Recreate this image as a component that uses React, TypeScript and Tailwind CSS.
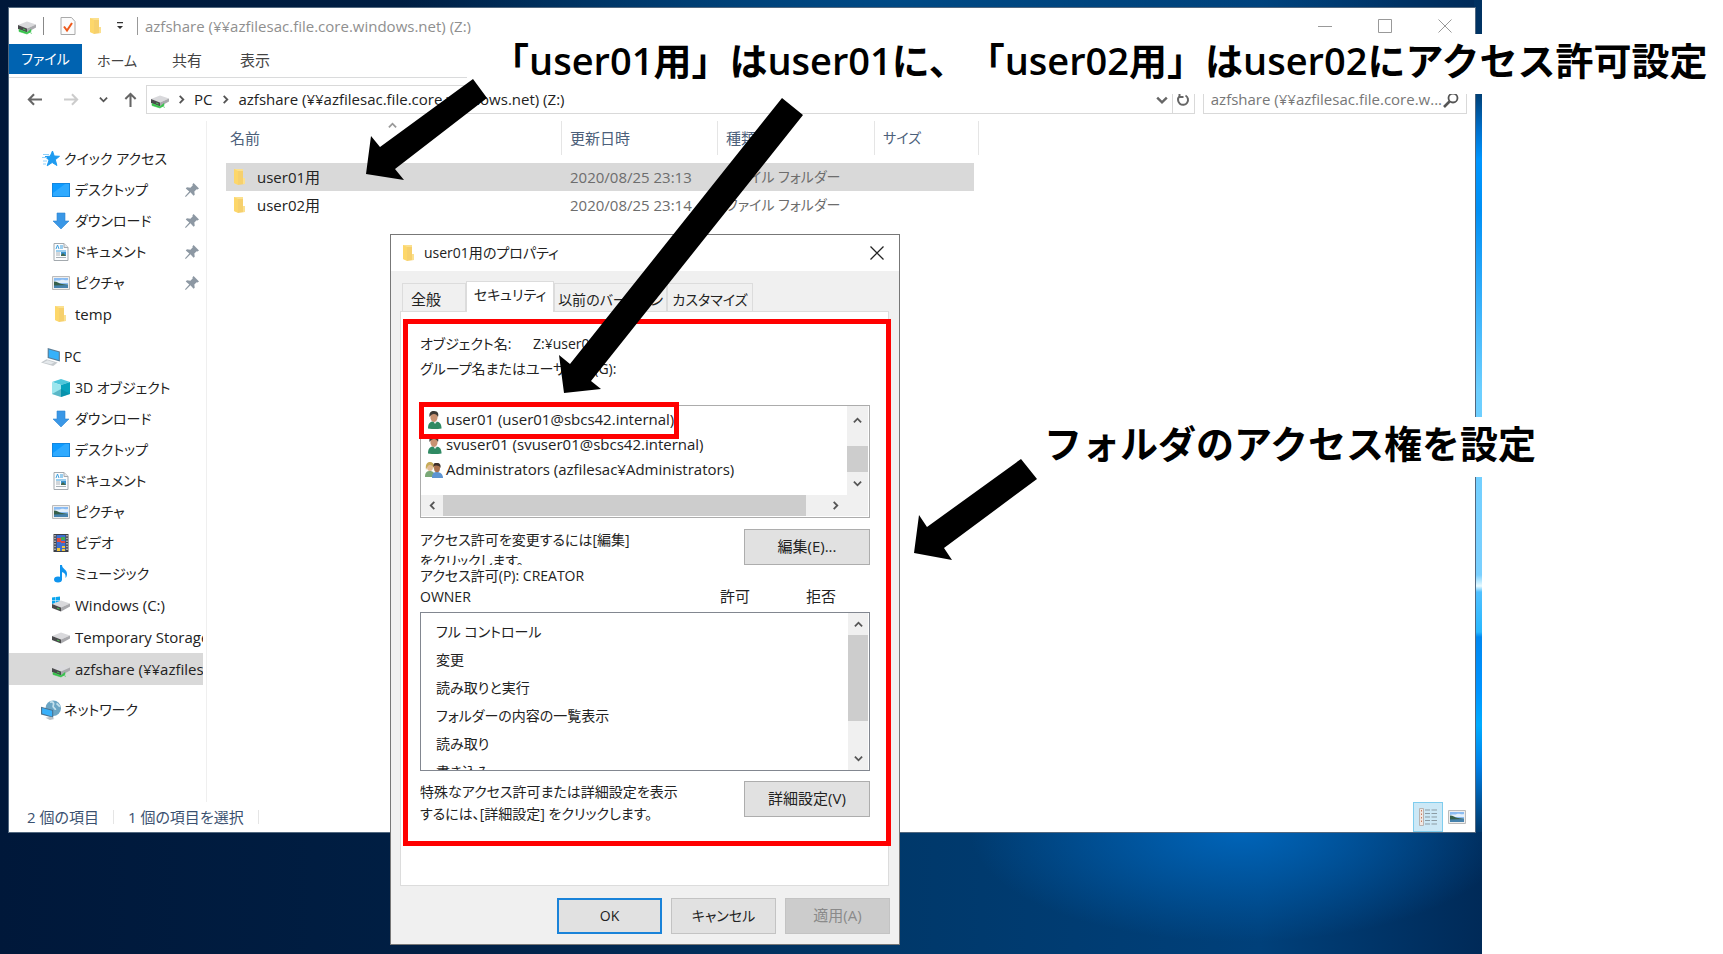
import type { ReactNode } from "react";

const Svg = ({ children, className = "w-[18px] h-[18px]" }: { children: ReactNode; className?: string }) => (
    <svg viewBox="0 0 18 18" className={`shrink-0 ${className}`} aria-hidden="true">{children}</svg>
);

const Folder = () => (
    <Svg>
        <path d="M3 1h9v14l-6 1-3-1z" fill="#fbe08f" />
        <path d="M3 1l4 2v14l-4-2z" fill="#fdd76a" />
        <path d="M7 3h5v11l2 2-7 1z" fill="#f6d06d" />
        <path d="M12 10h2v6h-2z" fill="#fbe08f" />
    </Svg>
);

const Drive = ({ network = false, windows = false }) => (
    <Svg className="w-5 h-[18px]">
        {windows && <path d="M0 1.500l3.500-.5v3.500H0zM4 1l4-.5v4H4zM0 5h3.500v3.500L0 8zM4 5h4v4l-4-.5z" fill="#0aa5ee" />}
        <path d="M0 8l9-3.500 9 3-9 4z" fill="#d9d9dc" />
        <path d="M0 8l9 3.500v4L0 12z" fill="#4a4a4c" />
        <path d="M9 11.500l9-4v3l-9 5z" fill="#a9a9ad" />
        <path d="M5 11.500l2.500 1v1L5 12.500z" fill="#44c553" />
        {network && <path d="M1 12.500l8 3 4-3v2l-4 2.500-8-2.500zM11 15l3 1.500" fill="#35c24a" stroke="#35c24a" strokeWidth=".6" />}
    </Svg>
);

const Star = () => (
    <Svg>
        <path d="M10.500 1l1.700 5 5.300.3-4.200 3.400 1.600 5.800-4.700-3-5 3.300 1.800-5.700L3 6.600l5.200-.4z" fill="#1e9bf0" stroke="#1e9bf0" />
        <path d="M1 4.500h6M0 7.500h5M1 11h4M1 14h3" stroke="#8fd0fa" strokeWidth="1" />
    </Svg>
);

const Desktop = () => (
    <Svg>
        <path d="M0 2h18v14H0z" fill="#1287e0" />
        <path d="M1 3h16v12H1z" fill="#0d9bff" />
        <path d="M1 12L13 3h4v12H1z" fill="#2faaff" />
    </Svg>
);

const Download = () => (
    <Svg><path d="M5 1h8v8h4l-8 8-8-8h4z" fill="#3a97e6" stroke="#2d84d2" strokeWidth=".6" /></Svg>
);

const Document = () => (
    <Svg>
        <path d="M2 .5h10l4 4v13H2z" fill="#fbfcfd" stroke="#a3a9ae" />
        <path d="M12 .5v4h4" fill="#e6e9ec" stroke="#a3a9ae" />
        <path d="M4 6l1.500-4L7 6M8 3h3M8 5h3M4 8h10" stroke="#3ba0e0" fill="none" />
        <path d="M9 9h5v4H9z" fill="#3d93cf" />
        <path d="M9 12l2-2 3 3H9z" fill="#44694f" />
        <path d="M4 10h4M4 12h4M4 14.500h10" stroke="#a8b0b6" />
    </Svg>
);

const Picture = () => (
    <Svg>
        <path d="M.5 2.500h17v13H.5z" fill="#eee" stroke="#bbb" />
        <path d="M2 4h14v10H2z" fill="#8bbcf2" />
        <path d="M2 7c3-1 5 0 7-1s4 1 7 0v3H2z" fill="#e3effb" />
        <path d="M2 7.500c3 0 5 2 8 2.500l6 .8V12H2z" fill="#37604a" />
        <path d="M2 11.500l14-.5v3H2z" fill="#4682ad" />
    </Svg>
);

const Thispc = () => (
    <Svg className="w-5 h-5">
        <path d="M6 1l11 3v9L6 10z" fill="#5b7c95" />
        <path d="M7 2.200l9 2.500v7L7 9.300z" fill="#35b1fa" />
        <path d="M0 14l5-3 10 3-4 3z" fill="#c5cace" />
        <path d="M2 14l4-2 6 2-3 1.500z" fill="#e4e8eb" />
    </Svg>
);

const Cube = () => (
    <Svg>
        <path d="M9 0l9 3-9 3-9-3z" fill="#4fc7db" />
        <path d="M0 3l9 3v12l-9-3z" fill="#9be6ee" />
        <path d="M18 3L9 6v12l9-3z" fill="#08a2bd" />
        <path d="M0 15l9-5 9 5-9 3z" fill="#0b7f96" opacity=".45" />
    </Svg>
);

const Video = () => (
    <Svg>
        <path d="M1.500 0h15v18h-15z" fill="#3c3f47" />
        <path d="M4.500 1h9v16h-9z" fill="#3e6fd0" />
        <path d="M3 1v16M15 1v16" stroke="#e8e8e8" strokeWidth="1.200" strokeDasharray="1.500 1.200" />
        <path d="M5 4h4v4H5z" fill="#e34b3d" />
        <path d="M9 3h4v3H9z" fill="#43a853" />
        <path d="M9 7h4v2H9z" fill="#e34b3d" />
        <path d="M5 14h3v3H5zM10 12h3v2h-3zM10 15h3v2h-3z" fill="#f3c63c" />
    </Svg>
);

const Music = () => (
    <Svg>
        <ellipse cx="6" cy="14.500" rx="4" ry="3" fill="#0f94ee" />
        <path d="M8 0h2c0 4 5 4 5 9 0 1.500-.5 3-1.500 4 .5-4-1-5-3.500-6v8H8z" fill="#0f94ee" />
    </Svg>
);

const Network = () => (
    <Svg className="w-5 h-5">
        <circle cx="11" cy="7.500" r="7" fill="#6ba5c4" />
        <path d="M8 2c3-1 4 1 3 3s2 2 2 4M14 3l3 3" stroke="#c3e0ec" fill="none" strokeWidth="1.600" />
        <path d="M0 6l11 3v7L0 13z" fill="#4c7390" />
        <path d="M1 7.200l9 2.500v5.100L1 12.200z" fill="#38b0fa" />
        <path d="M4 16l5-1 3 2-4 1z" fill="#b9c0c5" />
    </Svg>
);

const Pin = () => (
    <Svg className="w-[14px] h-[14px]">
        <path d="M11 0l7 7-2 1.500-1-.5-3 3 .5 4-1.500 1.500-4-4.500L1 18l-1-1 5.500-6L1 7l1.500-1.500 4.500.5 3-3-.5-1z" fill="#8d98a3" />
    </Svg>
);

const User = () => (
    <Svg>
        <path d="M3 17.500c0-5 2-7 5-7h3c4 0 5.500 3 5.500 7-3 .8-10 .8-13.500 0z" fill="#2f8a63" />
        <path d="M8 10l2 3 2.500-3z" fill="#e9e9e9" />
        <ellipse cx="9" cy="6" rx="3.600" ry="5" fill="#c89272" />
        <path d="M4.500 6C3.500 0 8 0 9 0c4 0 5 3 4 6-1-2-2-3-4-3s-3 1-4.500 3z" fill="#3b3733" />
    </Svg>
);

const Group = () => (
    <Svg>
        <path d="M0 16c0-5 2-6 5-6s5 2 5 6z" fill="#7aa877" />
        <ellipse cx="5" cy="6" rx="3" ry="4" fill="#e3bc95" />
        <path d="M1 9C0 2 3 1 5 1s5 1 4 7C8 5 7 4 5 4S2 6 1 9z" fill="#c7ab58" />
        <path d="M7 17c0-5 2-6 5-6s6 2 6 6z" fill="#5d94d2" />
        <ellipse cx="12" cy="7" rx="3" ry="4.200" fill="#a9714e" />
        <path d="M8.500 6C8 1 11 2 12 2c3 0 4 2 3.500 5C14 4 10 4 8.500 6z" fill="#3d2f29" />
    </Svg>
);

const turns = { up: "", right: "rotate-90", down: "rotate-180", left: "-rotate-90" };

const Chevron = ({ dir, className = "w-[9px] h-[9px] text-[#555]" }: { dir: keyof typeof turns; className?: string }) => (
    <svg viewBox="0 0 10 10" className={`shrink-0 ${turns[dir]} ${className}`} fill="none" stroke="currentColor" strokeWidth="2" aria-hidden="true">
        <path d="M1 7l4-4 4 4" />
    </svg>
);

const Arrow = ({ className }: { className: string }) => (
    <svg viewBox="0 0 16 16" className={`w-[15px] h-[15px] ${className}`} fill="none" stroke="currentColor" strokeWidth="2.200" aria-hidden="true">
        <path d="M16 8H2M7.500 2.500L2 8l5.500 5.500" />
    </svg>
);

type Item = { name: string; icon: ReactNode; pin?: boolean; latin?: boolean; active?: boolean };

const quickAccess: Item[] = [
    { name: "デスクトップ", icon: <Desktop />, pin: true },
    { name: "ダウンロード", icon: <Download />, pin: true },
    { name: "ドキュメント", icon: <Document />, pin: true },
    { name: "ピクチャ", icon: <Picture />, pin: true },
    { name: "temp", icon: <Folder />, latin: true },
];

const thisPc: Item[] = [
    { name: "3D オブジェクト", icon: <Cube /> },
    { name: "ダウンロード", icon: <Download /> },
    { name: "デスクトップ", icon: <Desktop /> },
    { name: "ドキュメント", icon: <Document /> },
    { name: "ピクチャ", icon: <Picture /> },
    { name: "ビデオ", icon: <Video /> },
    { name: "ミュージック", icon: <Music /> },
    { name: "Windows (C:)", icon: <Drive windows />, latin: true },
    { name: "Temporary Storage (D:)", icon: <Drive />, latin: true },
    { name: "azfshare (¥¥azfilesac.file.core.windows.net) (Z:)", icon: <Drive network />, latin: true, active: true },
];

const files = [
    { name: "user01用", date: "2020/08/25 23:13", type: "ファイル フォルダー", selected: true },
    { name: "user02用", date: "2020/08/25 23:14", type: "ファイル フォルダー", selected: false },
];

const principals = [
    { name: "user01 (user01@sbcs42.internal)", icon: <User /> },
    { name: "svuser01 (svuser01@sbcs42.internal)", icon: <User /> },
    { name: "Administrators (azfilesac¥Administrators)", icon: <Group /> },
];

const permissions = ["フル コントロール", "変更", "読み取りと実行", "フォルダーの内容の一覧表示", "読み取り", "書き込み"];

const TreeItem = ({ item }: { item: Item }) => (
    <a href="#" className={`flex items-center gap-[5px] pl-[42px] overflow-hidden whitespace-nowrap ${item.latin ? "h-8" : "h-[31px] text-sm"} ${item.active ? "bg-[#d9d9d9]" : ""}`}>
        <span className="w-[19px] shrink-0 flex justify-center">{item.icon}</span>
        <span>{item.name}</span>
        {item.pin && <span className="ml-auto mr-1"><Pin /></span>}
    </a>
);

const TreeRoot = ({ name, icon }: { name: string; icon: ReactNode }) => (
    <a href="#" className="flex items-center gap-[3px] pl-8 h-[31px] text-sm">
        <span className="w-5 shrink-0 flex justify-center">{icon}</span>
        <span>{name}</span>
    </a>
);

const Explorer = () => (
    <section className="absolute left-2 right-[6px] top-[7px] bottom-[121px] flex flex-col bg-white border border-[#52687f]">
        <header className="flex items-center h-9 pl-2 text-[#8f8f8f]">
            <Drive network />
            <span className="h-[18px] border-l border-[#888] ml-[6px]" />
            <svg viewBox="0 0 16 18" className="w-4 h-[18px] ml-4" fill="none" aria-hidden="true">
                <path d="M1 .5h10.500l3.500 4v13H1z" fill="#fcfcfc" stroke="#aaa" />
                <path d="M4 9.500l3 4 5-7.500" stroke="#ee5a1c" strokeWidth="2" />
            </svg>
            <span className="ml-[11px]"><Folder /></span>
            <svg viewBox="0 0 8 8" className="w-2 h-2 ml-[11px]" aria-hidden="true"><path d="M1 0h6v1.200H1zM1 4h6L4 7z" fill="#333" /></svg>
            <span className="h-[18px] border-l border-[#999] ml-[13px]" />
            <h1 className="ml-[7px]">azfshare (¥¥azfilesac.file.core.windows.net) (Z:)</h1>
            <div className="ml-auto flex items-center gap-[46px] mr-[23px] text-[#999]">
                <button aria-label="最小化" className="w-[14px] h-[14px]"><svg viewBox="0 0 14 14" stroke="currentColor" fill="none"><path d="M0 7.500h14" /></svg></button>
                <button aria-label="最大化" className="w-[14px] h-[14px]"><svg viewBox="0 0 14 14" stroke="currentColor" fill="none"><path d="M.5.5h13v13H.5z" /></svg></button>
                <button aria-label="閉じる" className="w-[14px] h-[14px]"><svg viewBox="0 0 14 14" stroke="currentColor" fill="none"><path d="M.5.5l13 13M13.500.5l-13 13" /></svg></button>
            </div>
        </header>

        <nav className="flex h-[34px] border-b border-[#dadbdc] text-[#444]">
            <button className="w-[73px] h-[30px] bg-[#0063b1] text-white text-sm">ファイル</button>
            <button className="w-[70px] h-[33px] text-sm">ホーム</button>
            <button className="w-[70px] h-[33px]">共有</button>
            <button className="w-[66px] h-[33px]">表示</button>
        </nav>

        <div className="flex items-center h-[43px] pl-[18px] pr-2 text-[#666]">
            <button aria-label="戻る"><Arrow className="text-[#666]" /></button>
            <button aria-label="進む" className="ml-[22px]"><Arrow className="rotate-180 text-[#ccc]" /></button>
            <button aria-label="最近表示した場所" className="ml-5"><Chevron dir="down" /></button>
            <button aria-label="上へ" className="ml-[15px]"><Arrow className="rotate-90 text-[#666]" /></button>
            <div className="flex items-center flex-1 h-[29px] ml-2 border border-[#d9d9d9] text-[#222]">
                <span className="ml-[3px]"><Drive network /></span>
                <span className="ml-[7px]"><Chevron dir="right" /></span>
                <button className="ml-2">PC</button>
                <span className="ml-[9px]"><Chevron dir="right" /></span>
                <button className="ml-2">azfshare (¥¥azfilesac.file.core.windows.net) (Z:)</button>
                <button aria-label="履歴" className="ml-auto mr-1"><Chevron dir="down" className="w-3 h-3 text-[#666]" /></button>
                <button aria-label="更新" className="flex items-center justify-center w-[22px] h-full border-l border-[#d9d9d9]">
                    <svg viewBox="0 0 14 14" className="w-[14px] h-[14px]" fill="none" stroke="#666" strokeWidth="2" aria-hidden="true">
                        <path d="M9.500 2.500a5 5 0 1 1-6 .8M3.500 0v4h4" />
                    </svg>
                </button>
            </div>
            <label className="flex items-center w-[264px] h-[29px] ml-2 pl-[7px] pr-[7px] border border-[#d9d9d9]">
                <input type="text" aria-label="検索" placeholder="azfshare (¥¥azfilesac.file.core.w..." className="flex-1 min-w-0 outline-none placeholder:text-[#777]" />
                <svg viewBox="0 0 16 16" className="w-4 h-4" fill="none" stroke="#555" aria-hidden="true">
                    <circle cx="10" cy="6" r="4.500" strokeWidth="1.800" />
                    <path d="M6.500 9.500L1 15" strokeWidth="2.600" />
                </svg>
            </label>
        </div>

        <div className="flex flex-1 min-h-0">
            <nav className="w-[198px] shrink-0 pt-[22px] pr-[3px] border-r border-[#efefef] text-[#222]">
                <TreeRoot name="クイック アクセス" icon={<Star />} />
                {quickAccess.map((item) => <TreeItem key={item.name} item={item} />)}
                <div className="mt-[11px]">
                    <TreeRoot name="PC" icon={<Thispc />} />
                    {thisPc.map((item) => <TreeItem key={item.name} item={item} />)}
                </div>
                <div className="mt-[9px]">
                    <TreeRoot name="ネットワーク" icon={<Network />} />
                </div>
            </nav>
            <main className="flex-1 pl-[19px]">
                <table className="w-[753px] table-fixed text-left text-[#6d6d6d]">
                    <thead className="text-[#4c607a]">
                        <tr className="h-[42px] align-top">
                            <th className="relative w-[336px] p-0 font-normal">
                                <span className="absolute inset-x-0 top-0 flex justify-center pr-1"><Chevron dir="up" className="w-[9px] h-[9px] text-[#999]" /></span>
                                <span className="flex items-center h-[34px] pl-1 border-r border-[#e5e5e5]">名前</span>
                            </th>
                            <th className="w-[156px] p-0 font-normal"><span className="flex items-center h-[34px] pl-2 border-r border-[#e5e5e5]">更新日時</span></th>
                            <th className="w-[157px] p-0 font-normal"><span className="flex items-center h-[34px] pl-2 border-r border-[#e5e5e5]">種類</span></th>
                            <th className="p-0 font-normal"><span className="flex items-center h-[34px] pl-2 border-r border-[#e5e5e5] text-sm">サイズ</span></th>
                        </tr>
                    </thead>
                    <tbody>
                        {files.map((file) => (
                            <tr key={file.name} className={`h-7 bg-no-repeat bg-[length:748px_100%] ${file.selected ? "bg-[linear-gradient(#d9d9d9,#d9d9d9)]" : ""}`}>
                                <td className="p-0 text-[#222]"><span className="flex items-center gap-2 pl-[5px]"><Folder />{file.name}</span></td>
                                <td className="p-0 pl-2">{file.date}</td>
                                <td className="p-0 pl-2 text-sm">{file.type}</td>
                                <td className="p-0" />
                            </tr>
                        ))}
                    </tbody>
                </table>
            </main>
        </div>

        <footer className="flex items-center h-[30px] pl-[18px] pr-[9px] text-[#3b5170]">
            <span>2 個の項目</span>
            <span className="h-[14px] border-l border-[#e5e5e5] mx-[14px]" />
            <span>1 個の項目を選択</span>
            <span className="h-[14px] border-l border-[#e5e5e5] ml-[14px]" />
            <button aria-label="詳細" className="ml-auto flex items-center justify-center w-[30px] h-[30px] border border-[#7fcdee] bg-[#cce8f6]">
                <svg viewBox="0 0 18 18" className="w-[18px] h-[18px]" fill="none" aria-hidden="true">
                    <path d="M.5.5h4v17h-4z" fill="#f0e8e4" stroke="#b9b3b0" />
                    <path d="M2.500 2v14" stroke="#c87d5f" strokeDasharray="1.500 2" />
                    <path d="M6 2h5M12.500 2H18M6 5.500h5M12.500 5.500H18M6 9h5M12.500 9H18M6 12.500h5M12.500 12.500H18M6 16h5M12.500 16H18" stroke="#8b9ba3" />
                </svg>
            </button>
            <button aria-label="大きいアイコン" className="ml-[5px]"><Picture /></button>
        </footer>
    </section>
);

const dialogButton = "flex items-center justify-center w-[126px] h-9 shrink-0 border border-[#adadad] bg-[#e1e1e1] text-[15px]";

const Properties = () => (
    <section role="dialog" aria-label="user01用のプロパティ" className="absolute left-[390px] top-[234px] w-[510px] flex flex-col bg-[#f0f0f0] border border-[#777] text-[#222] text-sm">
        <header className="flex items-center h-9 pl-[9px] pr-[15px] bg-white">
            <Folder />
            <h2 className="ml-[6px]">user01用のプロパティ</h2>
            <button aria-label="閉じる" className="ml-auto w-[14px] h-[14px]">
                <svg viewBox="0 0 14 14" fill="none" stroke="#222" strokeWidth="1.300"><path d="M.5.5l13 13M13.500.5l-13 13" /></svg>
            </button>
        </header>

        <div className="relative pt-[10px] pl-[9px] pr-[10px]">
            <div role="tablist" className="flex items-end h-[30px] pl-[2px]">
                <button role="tab" className="w-16 h-7 pt-1 pr-4 border border-b-0 border-[#dcdcdc] text-[15px]">全般</button>
                <button role="tab" aria-selected="true" className="w-[88px] h-[31px] -mb-px pb-1 bg-white border border-b-0 border-[#dcdcdc] z-10">セキュリティ</button>
                <button role="tab" className="w-[113px] h-7 pt-1 border border-b-0 border-[#dcdcdc] whitespace-nowrap">以前のバージョン</button>
                <button role="tab" className="w-[86px] h-7 pt-1 border border-b-0 border-[#dcdcdc] whitespace-nowrap">カスタマイズ</button>
            </div>

            <div role="tabpanel" className="bg-white border border-[#dcdcdc] pt-[22px] pl-[19px] pr-[18px] pb-[60px]">
                <div className="flex leading-5">
                    <span className="w-[113px]">オブジェクト名:</span>
                    <span>Z:¥user01用</span>
                </div>
                <p className="mt-[5px] leading-5">グループ名またはユーザー名(G):</p>

                <div className="mt-[26px] h-[113px] flex flex-col border border-[#acacac]">
                    <div className="flex flex-1 min-h-0">
                        <ul className="flex-1 pt-px pl-1 text-[15px]">
                            {principals.map((p) => (
                                <li key={p.name} className="flex items-center gap-[3px] h-[25px] whitespace-nowrap">{p.icon}{p.name}</li>
                            ))}
                        </ul>
                        <div className="w-[21px] mr-px flex flex-col items-center bg-[#f0f0f0]">
                            <button aria-label="上へスクロール" className="h-[40px] pb-3"><Chevron dir="up" /></button>
                            <span className="w-full h-[26px] bg-[#cdcdcd]" />
                            <button aria-label="下へスクロール" className="flex-1"><Chevron dir="down" /></button>
                        </div>
                    </div>
                    <div className="flex items-center h-[21px] mr-px mb-px bg-[#f0f0f0]">
                        <button aria-label="左へスクロール" className="w-[22px] flex justify-center"><Chevron dir="left" /></button>
                        <span className="w-[363px] h-full bg-[#cdcdcd]" />
                        <button aria-label="右へスクロール" className="ml-[25px]"><Chevron dir="right" /></button>
                    </div>
                </div>

                <div className="flex justify-between mt-[11px]">
                    <p className="h-9 leading-[21px] overflow-hidden">アクセス許可を変更するには[編集]<br />をクリックします。</p>
                    <button className={dialogButton}>編集(E)...</button>
                </div>

                <div className="flex items-end leading-[21px] pr-[34px]">
                    <p className="flex-1">アクセス許可(P): CREATOR<br />OWNER</p>
                    <span className="w-[86px] text-[15px]">許可</span>
                    <span className="text-[15px]">拒否</span>
                </div>

                <div className="flex mt-[5px] h-[159px] border border-[#828790]">
                    <ul className="flex-1 pt-[5px] pl-[15px] overflow-hidden">
                        {permissions.map((p) => <li key={p} className="flex items-center h-7">{p}</li>)}
                    </ul>
                    <div className="w-5 mr-px flex flex-col items-center bg-[#f0f0f0]">
                        <button aria-label="上へスクロール" className="h-[22px]"><Chevron dir="up" /></button>
                        <span className="w-full h-[86px] bg-[#cdcdcd]" />
                        <button aria-label="下へスクロール" className="mt-auto h-6"><Chevron dir="down" /></button>
                    </div>
                </div>

                <div className="flex justify-between mt-[10px]">
                    <p className="leading-[22px]">特殊なアクセス許可または詳細設定を表示<br />するには、[詳細設定] をクリックします。</p>
                    <button className={dialogButton}>詳細設定(V)</button>
                </div>
            </div>

            {/* highlight frames */}
            <div className="absolute left-3 right-2 top-12 bottom-10 border-[5px] border-[#f00]" />
            <div className="absolute left-7 top-[131px] w-[260px] h-[37px] border-[5px] border-[#f00]" />
        </div>

        <footer className="flex justify-end gap-[9px] pt-3 pr-[9px] pb-[10px]">
            <button className="w-[105px] h-9 border-2 border-[#1a83d9] bg-[#e1e1e1]">OK</button>
            <button className="w-[105px] h-9 border border-[#c3c3c3] bg-[#e1e1e1]">キャンセル</button>
            <button disabled className="w-[105px] h-9 border border-[#c3c3c3] bg-[#ccc] text-[#8a8a8a] text-[15px]">適用(A)</button>
        </footer>
    </section>
);

const App = () => {
    return (
        <div className="relative min-h-screen bg-white overflow-hidden text-[15px] font-['Open_Sans','Noto_Sans_CJK_JP',sans-serif] [font-feature-settings:'palt']">
            <div className="relative w-[86%] h-screen min-h-[954px] [background:linear-gradient(180deg,#003060_0,#003a6c_90px,#0070cc_130px,#0096ff_160px,#0090f5_210px,#6ccfff_390px,#7ad0ff_575px,#e8faff_586px,#50c0ff_592px,#28b8ff_632px,#0088f0_637px,#0094ff_690px,#00acff_725px,#0080e8_765px,#0058a0_800px,#00386c_832px)_right_top/8px_832px_no-repeat,radial-gradient(ellipse_270px_110px_at_1240px_832px,#0064b8,transparent),radial-gradient(ellipse_500px_60px_at_900px_0,#004a86,transparent),linear-gradient(90deg,#00183a,#001f44_30%,#00386a_60%,#00407a_85%,#002a58)]">
                <Explorer />
                <Properties />
            </div>

            <p className="absolute left-[467px] right-0 top-[34px] h-[60px] pl-6 bg-white text-black text-[38px] leading-[52px] font-semibold whitespace-nowrap [font-feature-settings:normal] [text-spacing-trim:space-all]">
                「user01用」はuser01に、「user02用」はuser02にアクセス許可設定
            </p>
            <p className="absolute left-[1036px] right-0 top-[417px] h-[60px] pl-2 bg-white text-black text-[38px] leading-[52px] font-semibold whitespace-nowrap [font-feature-settings:normal]">
                フォルダのアクセス権を設定
            </p>

            <svg viewBox="0 0 1723 954" className="absolute left-0 top-0 w-[1723px] h-[954px] pointer-events-none" aria-hidden="true">
                <path d="M366 174l5-38 9 11 93-68 14 19-92 71 9 11z" />
                <path d="M564 393l-5-38 11 9L782 98l21 17-212 266 10 8z" />
                <path d="M914 553l5-38 8 12 94-68 16 20-93 69 8 12z" />
            </svg>
        </div>
    );
};

export default App;
